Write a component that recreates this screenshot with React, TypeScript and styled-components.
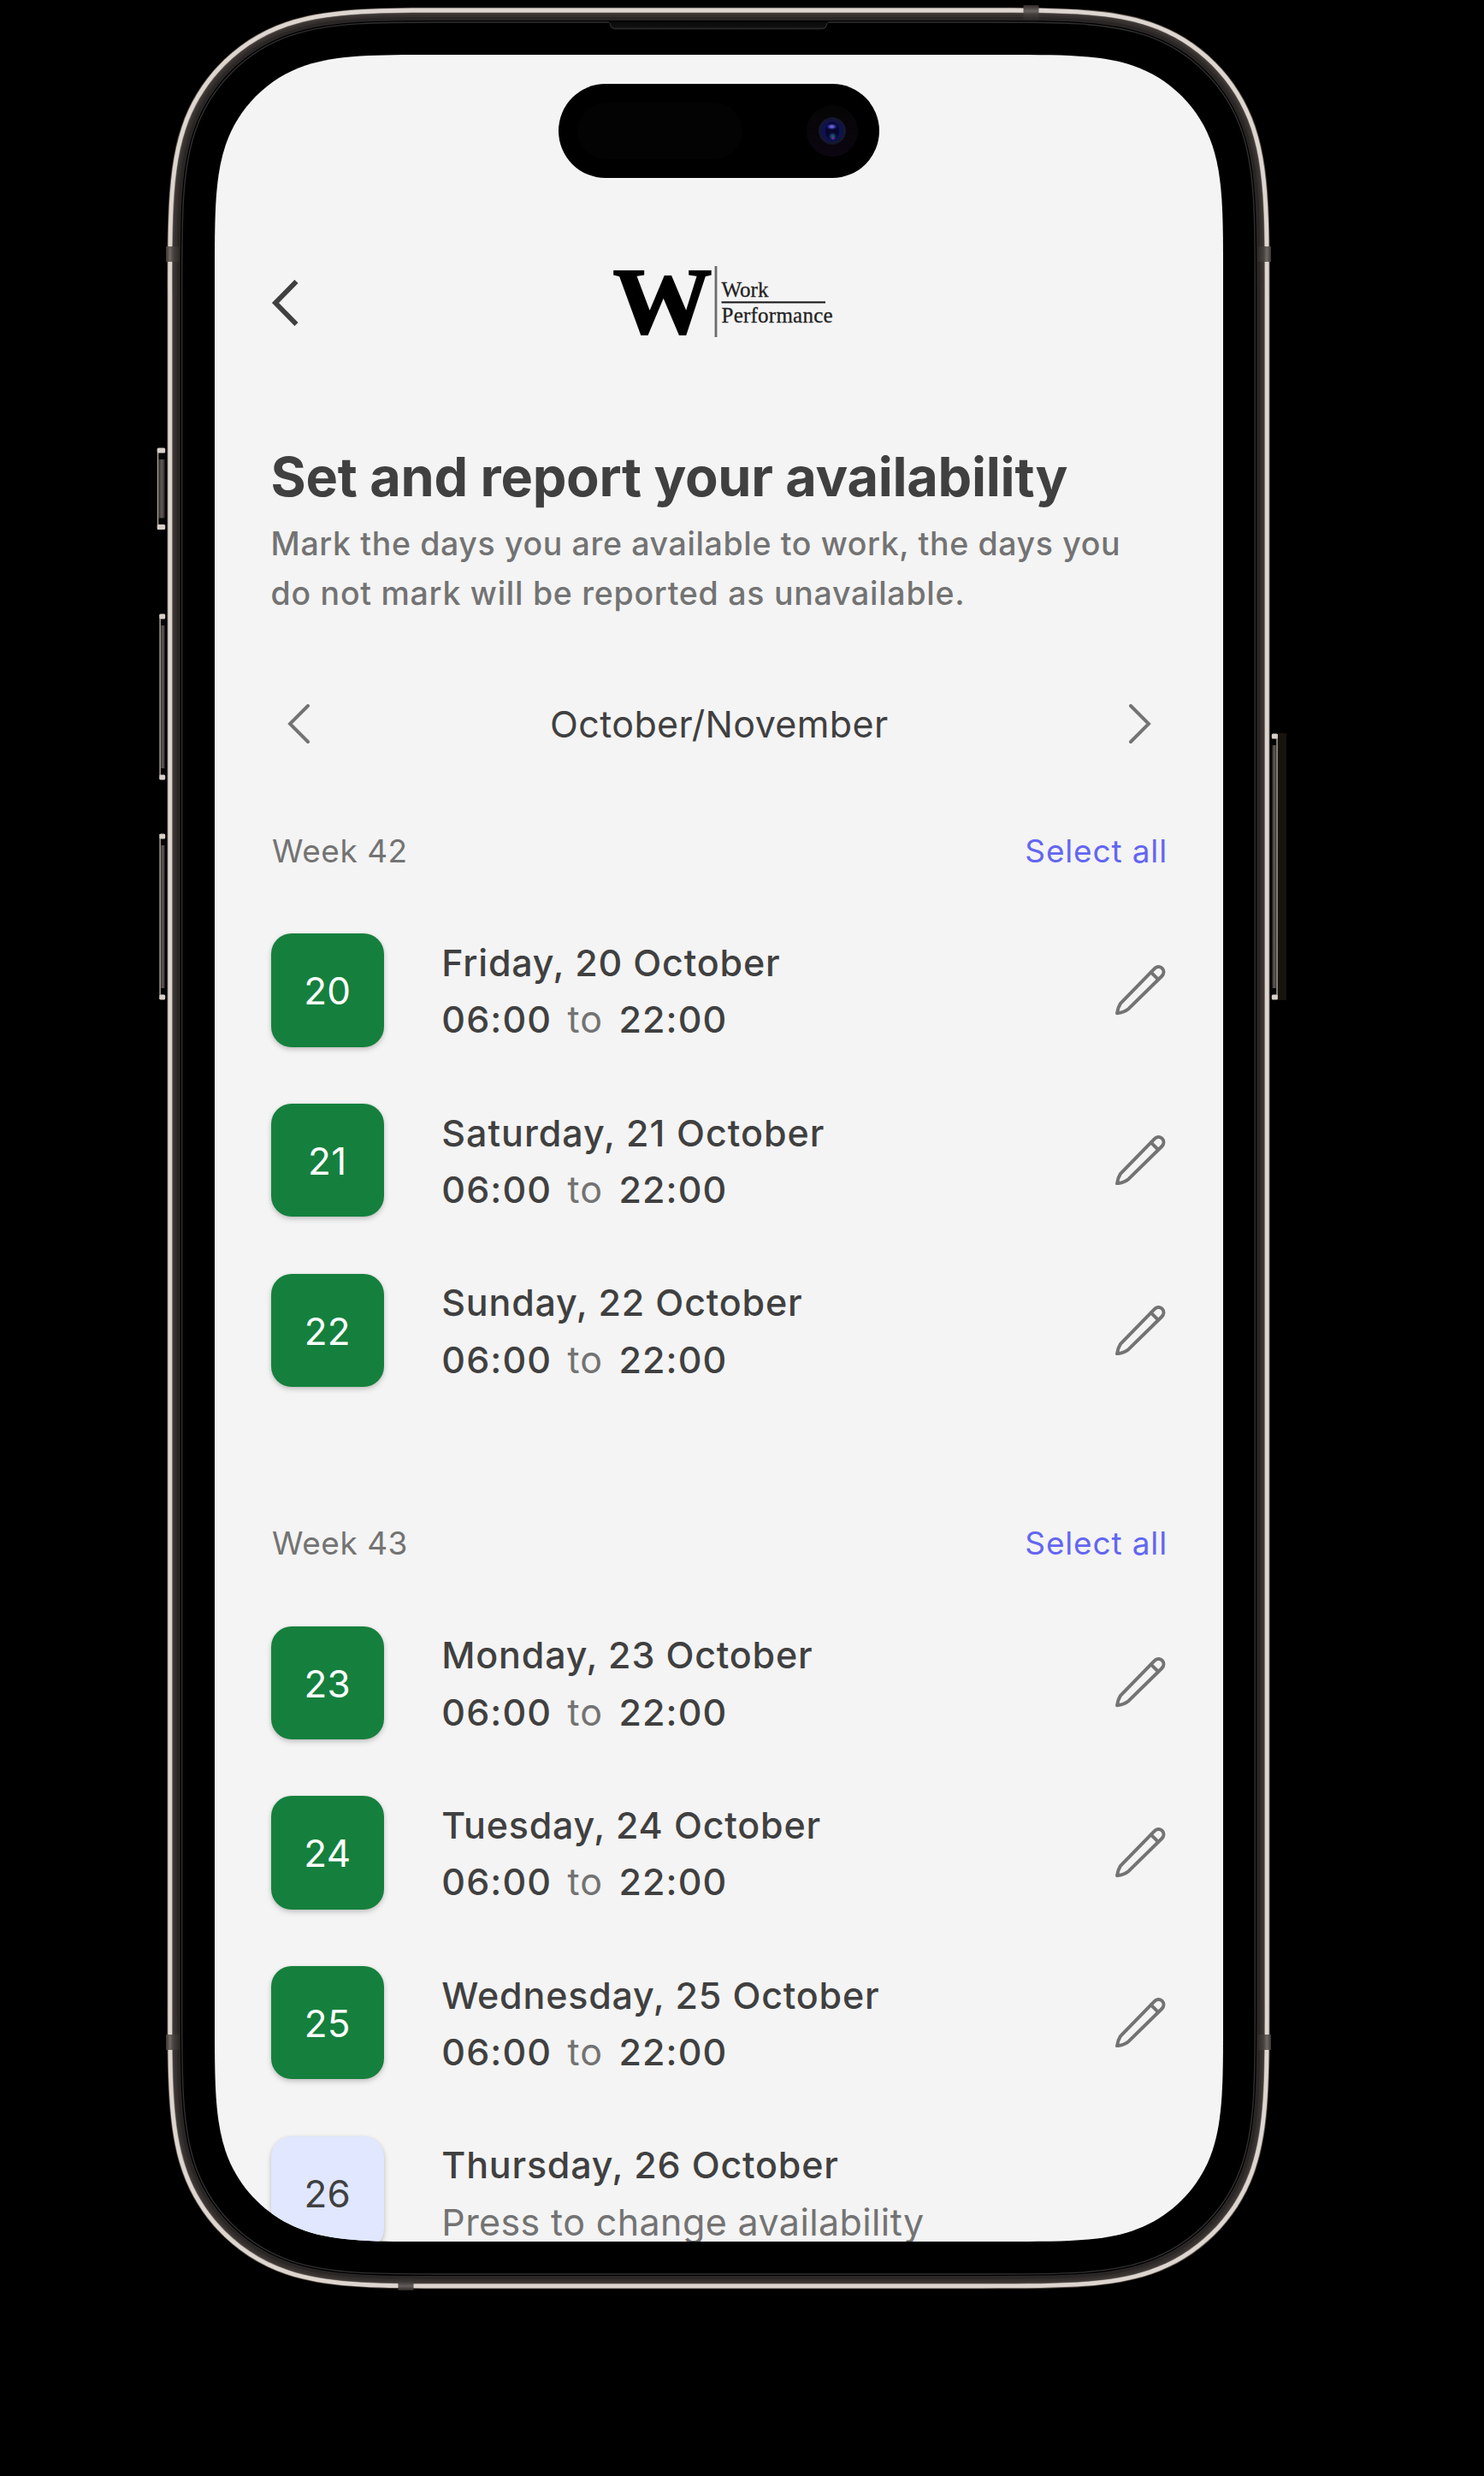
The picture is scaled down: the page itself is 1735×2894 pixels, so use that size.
import React from 'react';
import styled, { createGlobalStyle } from 'styled-components';

const SCREEN = { x: 251, y: 64, w: 1179, h: 2556 };

const colors = {
  surface: '#f4f4f4',
  strong: '#404040',
  muted: '#737373',
  accent: '#6366f1',
  available: '#15803d',
  open: '#e0e7ff',
};

/** Rounded rectangle with continuous (squircle-like) corners. */
function squircle(x: number, y: number, w: number, h: number, r: number): string {
  const corners: Array<[number, number, number, number, boolean]> = [
    [x + w, y, -1, 1, false],
    [x + w, y + h, -1, -1, true],
    [x, y + h, 1, -1, false],
    [x, y, 1, 1, true],
  ];
  const forward = [
    [1.52866, 0],
    [1.12, 0], [0.8562, 0], [0.63149, 0.07491],
    [0.3706, 0.1619], [0.1619, 0.3706], [0.07491, 0.63149],
    [0, 0.8562], [0, 1.12], [0, 1.52866],
  ];
  const parts = corners.map(([cx, cy, sx, sy, swap], i) => {
    const p = forward.map(([a, b]) => {
      const [u, v] = swap ? [b, a] : [a, b];
      return `${(cx + sx * u * r).toFixed(2)} ${(cy + sy * v * r).toFixed(2)}`;
    });
    return `${i ? 'L' : 'M'}${p[0]} C${p[1]} ${p[2]} ${p[3]} C${p[4]} ${p[5]} ${p[6]} C${p[7]} ${p[8]} ${p[9]}`;
  });
  return `${parts.join(' ')} Z`;
}

const GlobalStyle = createGlobalStyle`
  html, body { margin: 0; padding: 0; background: #000; }
  *, *::before, *::after { box-sizing: border-box; }
`;

const Stage = styled.main`
  width: 1735px;
  height: 2894px;
  padding: ${SCREEN.y}px 0 0 ${SCREEN.x}px;
  overflow: hidden;
  background: #000;
  font-family: Inter, 'Liberation Sans', sans-serif;
`;

const Phone = styled.div`
  position: relative;
  width: ${SCREEN.w}px;
  height: ${SCREEN.h}px;
`;

const FrameSvg = styled.svg`
  position: absolute;
  left: -${SCREEN.x}px;
  top: -${SCREEN.y}px;
  display: block;
  pointer-events: none;
`;

const Screen = styled.div`
  position: relative;
  height: 100%;
  padding: 244px 65.5px 0 65.6px;
  overflow: hidden;
  background: ${colors.surface};
  clip-path: path('${squircle(0, 0, SCREEN.w, SCREEN.h, 168)}');
`;

const Island = styled.div`
  position: absolute;
  top: 34px;
  left: 401.7px;
  width: 375px;
  height: 110px;
  border-radius: 55px;
  background: #000;
  display: flex;
  align-items: center;
  justify-content: space-between;
  padding: 0 25px 0 22px;
`;

const Sensor = styled.div`
  width: 193px;
  height: 66px;
  border-radius: 33px;
  background: #030303;
`;

const Header = styled.header`
  display: grid;
  grid-template-columns: 160px 1fr 160px;
  align-items: center;
  height: 90px;
`;

const IconButton = styled.button`
  display: flex;
  align-items: center;
  padding: 0;
  border: 0;
  background: none;
  color: ${colors.muted};
  font: inherit;
  svg { display: block; }
`;

const LogoSlot = styled.div`
  display: flex;
  justify-content: center;
  padding-left: 8px;
  svg { display: block; overflow: visible; }
`;

const Title = styled.h1`
  margin: 121px 0 0;
  color: ${colors.strong};
  font-size: 63px;
  font-weight: 700;
  line-height: 76px;
  letter-spacing: -0.28px;
  white-space: nowrap;
`;

const Intro = styled.p`
  margin: 11.5px 0 0;
  color: ${colors.muted};
  font-size: 37.5px;
  font-weight: 500;
  line-height: 58.4px;
  white-space: nowrap;
`;

const IntroLine = styled.span<{ $tracking: number }>`
  display: block;
  letter-spacing: ${(p) => p.$tracking}px;
`;

const MonthBar = styled.nav`
  display: flex;
  align-items: center;
  justify-content: space-between;
  height: 46px;
  margin: 99.2px 19px 0 19.5px;
`;

const Month = styled.span`
  color: ${colors.strong};
  font-size: 43px;
  line-height: 46px;
  letter-spacing: 0.38px;
`;

const WeekSection = styled.section<{ $gap: number }>`
  margin-top: ${(p) => p.$gap}px;
`;

const WeekHeader = styled.div`
  display: flex;
  justify-content: space-between;
  height: 44px;
  font-size: 37px;
  line-height: 44px;
`;

const WeekName = styled.h2`
  margin: 0;
  padding-left: 1.5px;
  color: ${colors.muted};
  font-size: inherit;
  font-weight: 400;
  letter-spacing: 0.52px;
`;

const SelectAll = styled.button`
  padding: 0;
  border: 0;
  background: none;
  color: ${colors.accent};
  font: inherit;
  letter-spacing: 0.85px;
  margin-right: -0.5px;
`;

const DayList = styled.ul`
  display: flex;
  flex-direction: column;
  gap: 66.3px;
  margin: 73.3px 0 0;
  padding: 0;
  list-style: none;
`;

const DayRow = styled.li`
  display: grid;
  grid-template-columns: 132.4px 1fr auto;
  align-items: center;
  column-gap: 67.3px;
  height: 132.4px;
  padding-right: 2px;
`;

const DayBadge = styled.div<{ $available: boolean }>`
  display: flex;
  align-items: center;
  justify-content: center;
  height: 132.4px;
  padding-top: 2px;
  border-radius: 24px;
  background: ${(p) => (p.$available ? colors.available : colors.open)};
  color: ${(p) => (p.$available ? '#fff' : colors.strong)};
  box-shadow: 0 3px 6px rgba(0, 0, 0, 0.17), 0 1px 4px rgba(0, 0, 0, 0.08);
  font-size: 44px;
  letter-spacing: 0.3px;
`;

const DayText = styled.div`
  padding-top: 1.6px;
  color: ${colors.strong};
  font-size: 43px;
  line-height: 66.2px;
  white-space: nowrap;
`;

const DayName = styled.div<{ $tracking: number }>`
  font-weight: 500;
  letter-spacing: ${(p) => p.$tracking}px;
`;

const Hours = styled.div`
  display: flex;
  gap: 18.4px;
  font-weight: 500;
  letter-spacing: 1.1px;
`;

const HoursTo = styled.span`
  color: ${colors.muted};
  font-weight: 400;
  letter-spacing: 1px;
`;

const Hint = styled.div`
  color: ${colors.muted};
  letter-spacing: 0.39px;
`;

function Chevron({ flip, large }: { flip?: boolean; large?: boolean }) {
  if (large) {
    return (
      <svg width="34" height="56" viewBox="0 0 34 56" fill="none" stroke={colors.strong} strokeWidth="5.8">
        <path d="M29.5 4 L5 29 L29.5 54" />
      </svg>
    );
  }
  return (
    <svg
      width="26"
      height="46"
      viewBox="0 0 26 46"
      fill="none"
      stroke="currentColor"
      strokeWidth="3.9"
      strokeLinecap="round"
    >
      <path d={flip ? 'M2 2 L23 23 L2 44' : 'M24 2 L3 23 L24 44'} />
    </svg>
  );
}

function Pencil() {
  return (
    <svg
      width="58.6"
      height="58.6"
      viewBox="0 0 176 176"
      fill="none"
      stroke="currentColor"
      strokeWidth="12"
      strokeLinecap="round"
      strokeLinejoin="round"
    >
      <path d="M6 169 C8 156 12 144 18 135 L136 14 C144 5 156 3 164 11 C172 19 171 31 163 39 L47 153 C36 162 22 167 6 169 Z" />
      <path d="M125 25 L150 50" />
    </svg>
  );
}

function Logo() {
  return (
    <svg width="258" height="84" viewBox="0 0 258 84" role="img" aria-label="Work Performance">
      <text
        transform="translate(0.4 78.2) scale(1.05 1)"
        fontFamily="'Liberation Serif', serif"
        fontWeight="700"
        fontSize="110.5"
        stroke="#000"
        strokeWidth="1.8"
      >
        W
      </text>
      <rect x="119.6" y="0" width="2.8" height="83" fill="#6b6b6b" />
      <text x="127.5" y="35.7" fontFamily="'Liberation Serif', serif" fontSize="25" fill="#222" stroke="#222" strokeWidth="0.3">
        Work
      </text>
      <rect x="127.5" y="41.3" width="121.5" height="2.1" fill="#1a1a1a" />
      <text
        x="127.5"
        y="66.3"
        fontFamily="'Liberation Serif', serif"
        fontSize="25"
        letterSpacing="0.24"
        fill="#222"
        stroke="#222"
        strokeWidth="0.3"
      >
        Performance
      </text>
    </svg>
  );
}

function Camera() {
  return (
    <svg width="60" height="60" viewBox="0 0 60 60">
      <defs>
        <linearGradient id="lensWell" x1="0" y1="0" x2="0" y2="1">
          <stop offset="0" stopColor="#050505" />
          <stop offset="1" stopColor="#0c0610" />
        </linearGradient>
        <radialGradient id="lensTop">
          <stop offset="0" stopColor="#8080e0" />
          <stop offset="0.5" stopColor="#3a3aa8" />
          <stop offset="1" stopColor="#0a0a4a" stopOpacity="0" />
        </radialGradient>
        <radialGradient id="lensBottom">
          <stop offset="0" stopColor="#1a6a72" />
          <stop offset="0.5" stopColor="#143560" />
          <stop offset="1" stopColor="#0a0a4a" stopOpacity="0" />
        </radialGradient>
      </defs>
      <circle cx="30" cy="30" r="30" fill="url(#lensWell)" />
      <circle cx="30" cy="30" r="16" fill="#15172f" />
      <circle cx="30" cy="30" r="12.6" fill="#0d1250" />
      <ellipse cx="30" cy="30" rx="8" ry="10.5" fill="#07072c" />
      <ellipse cx="29.5" cy="25" rx="7" ry="4" fill="url(#lensTop)" />
      <circle cx="30.5" cy="36.5" r="5.5" fill="url(#lensBottom)" />
      <circle cx="31" cy="38.5" r="1.6" fill="#6a2a9a" />
    </svg>
  );
}

interface SideKeyProps {
  x: number;
  y: number;
  w: number;
  h: number;
  side: 'left' | 'right';
}

function SideKey({ x, y, w, h, side }: SideKeyProps) {
  const edge = side === 'left' ? x : x + w - 1.5;
  return (
    <g>
      <rect x={x} y={y} width={w} height={h} rx="2" fill="#050505" />
      <rect x={x + 1.5} y={y + 14} width={w - 3} height={h - 28} fill="url(#keyFace)" />
      <rect x={edge} y={y + 1} width="1.5" height={h - 2} fill="#a99f95" />
      <rect x={side === 'left' ? x : x + 1} y={y + 0.5} width={w - 1} height="6" rx="1.5" fill="#d8cfc8" />
      <rect x={side === 'left' ? x : x + 1} y={y + h - 6.5} width={w - 1} height="6" rx="1.5" fill="#d8cfc8" />
    </g>
  );
}

function PhoneFrame() {
  const ring = (inset: number) =>
    squircle(195.7 + inset, 9 + inset, 1288.6 - inset * 2, 2666 - inset * 2, 220 - inset);
  return (
    <FrameSvg width="1735" height="2894" viewBox="0 0 1735 2894" fill="none">
      <defs>
        <linearGradient id="keyFace" x1="0" y1="0" x2="1" y2="0">
          <stop offset="0" stopColor="#2b2725" />
          <stop offset="0.5" stopColor="#625d5a" />
          <stop offset="1" stopColor="#2b2725" />
        </linearGradient>
        <linearGradient id="speaker" x1="0" y1="0" x2="0" y2="1">
          <stop offset="0" stopColor="#080808" />
          <stop offset="1" stopColor="#131313" />
        </linearGradient>
        <linearGradient id="bandLeft" x1="0" y1="0" x2="1" y2="0">
          <stop offset="0" stopColor="#3a3532" />
          <stop offset="0.3" stopColor="#6f6a66" />
          <stop offset="0.55" stopColor="#45403d" />
          <stop offset="1" stopColor="#2c2826" />
        </linearGradient>
        <linearGradient id="bandRight" x1="1" y1="0" x2="0" y2="0">
          <stop offset="0" stopColor="#3a3532" />
          <stop offset="0.3" stopColor="#6f6a66" />
          <stop offset="0.55" stopColor="#45403d" />
          <stop offset="1" stopColor="#2c2826" />
        </linearGradient>
        <linearGradient id="bandTop" x1="0" y1="0" x2="0" y2="1">
          <stop offset="0" stopColor="#2e2a28" />
          <stop offset="0.4" stopColor="#6a6561" />
          <stop offset="0.6" stopColor="#45403d" />
          <stop offset="1" stopColor="#2c2826" />
        </linearGradient>
        <linearGradient id="bandBottom" x1="0" y1="1" x2="0" y2="0">
          <stop offset="0" stopColor="#2e2a28" />
          <stop offset="0.3" stopColor="#625d5a" />
          <stop offset="0.6" stopColor="#3b3735" />
          <stop offset="1" stopColor="#262322" />
        </linearGradient>
      </defs>

      <rect x="1494" y="857" width="10" height="312" fill="#17130f" />
      <SideKey x={183.8} y={523} w={10.4} h={96.5} side="left" />
      <SideKey x={186.4} y={717} w={7.8} h={195} side="left" />
      <SideKey x={186.4} y={974} w={7.8} h={195} side="left" />
      <SideKey x={1485.8} y={857} w={8} h={312} side="right" />

      <path d={ring(-0.3)} fill="#5d544c" />
      <path d={ring(0.6)} fill="#ddd5cf" />
      <path d={ring(5.4)} fill="#8a8078" />
      <path d={ring(6)} fill="#3f3a37" />
      <path d={ring(8)} fill="#35302e" />
      <path d={ring(11)} fill="#2a2625" />
      <path d={ring(15)} fill="#000" />
      <path d={ring(17)} stroke="#303030" strokeWidth="1.4" />

      <path d="M711 25 H969 C967 26 967 34 961 34 H719 C713 34 713 26 711 25 Z" fill="url(#speaker)" />
      <path d="M713 27 C714 31 715 33.5 719 33.5 H961 C965 33.5 966 31 967 27" stroke="#2c2c2c" strokeWidth="1.3" />

      <rect x="1196.5" y="6" width="18" height="17.5" fill="url(#bandTop)" />
      <rect x="465.5" y="2660.5" width="18" height="16.5" fill="url(#bandBottom)" />
      <rect x="194" y="288" width="16" height="18" fill="url(#bandLeft)" />
      <rect x="194" y="2378" width="16" height="18" fill="url(#bandLeft)" />
      <rect x="1470" y="288" width="16" height="18" fill="url(#bandRight)" />
      <rect x="1470" y="2378" width="16" height="18" fill="url(#bandRight)" />
    </FrameSvg>
  );
}

interface Day {
  date: number;
  name: string;
  hours?: [string, string];
  tracking?: number;
}

interface Week {
  name: string;
  gap: number;
  days: Day[];
}

const fullDay: [string, string] = ['06:00', '22:00'];

const weeks: Week[] = [
  {
    name: 'Week 42',
    gap: 104.7,
    days: [
      { date: 20, name: 'Friday, 20 October', hours: fullDay },
      { date: 21, name: 'Saturday, 21 October', hours: fullDay, tracking: 1 },
      { date: 22, name: 'Sunday, 22 October', hours: fullDay },
    ],
  },
  {
    name: 'Week 43',
    gap: 162.2,
    days: [
      { date: 23, name: 'Monday, 23 October', hours: fullDay },
      { date: 24, name: 'Tuesday, 24 October', hours: fullDay },
      { date: 25, name: 'Wednesday, 25 October', hours: fullDay },
      { date: 26, name: 'Thursday, 26 October' },
    ],
  },
];

function DayItem({ day }: { day: Day }) {
  return (
    <DayRow>
      <DayBadge $available={Boolean(day.hours)}>{day.date}</DayBadge>
      <DayText>
        <DayName $tracking={day.tracking ?? 0.8}>{day.name}</DayName>
        {day.hours ? (
          <Hours>
            <span>{day.hours[0]}</span>
            <HoursTo>to</HoursTo>
            <span>{day.hours[1]}</span>
          </Hours>
        ) : (
          <Hint>Press to change availability</Hint>
        )}
      </DayText>
      {day.hours && (
        <IconButton aria-label="Edit hours">
          <Pencil />
        </IconButton>
      )}
    </DayRow>
  );
}

export default function App() {
  return (
    <Stage>
      <GlobalStyle />
      <Phone>
        <PhoneFrame />
        <Screen>
          <Island>
            <Sensor />
            <Camera />
          </Island>
          <Header>
            <IconButton aria-label="Back">
              <Chevron large />
            </IconButton>
            <LogoSlot>
              <Logo />
            </LogoSlot>
          </Header>
          <Title>Set and report your availability</Title>
          <Intro>
            <IntroLine $tracking={0.63}>Mark the days you are available to work, the days you</IntroLine>
            <IntroLine $tracking={0.73}>do not mark will be reported as unavailable.</IntroLine>
          </Intro>
          <MonthBar>
            <IconButton aria-label="Previous month">
              <Chevron />
            </IconButton>
            <Month>October/November</Month>
            <IconButton aria-label="Next month">
              <Chevron flip />
            </IconButton>
          </MonthBar>
          {weeks.map((week) => (
            <WeekSection key={week.name} $gap={week.gap}>
              <WeekHeader>
                <WeekName>{week.name}</WeekName>
                <SelectAll>Select all</SelectAll>
              </WeekHeader>
              <DayList>
                {week.days.map((day) => (
                  <DayItem key={day.date} day={day} />
                ))}
              </DayList>
            </WeekSection>
          ))}
        </Screen>
      </Phone>
    </Stage>
  );
}
